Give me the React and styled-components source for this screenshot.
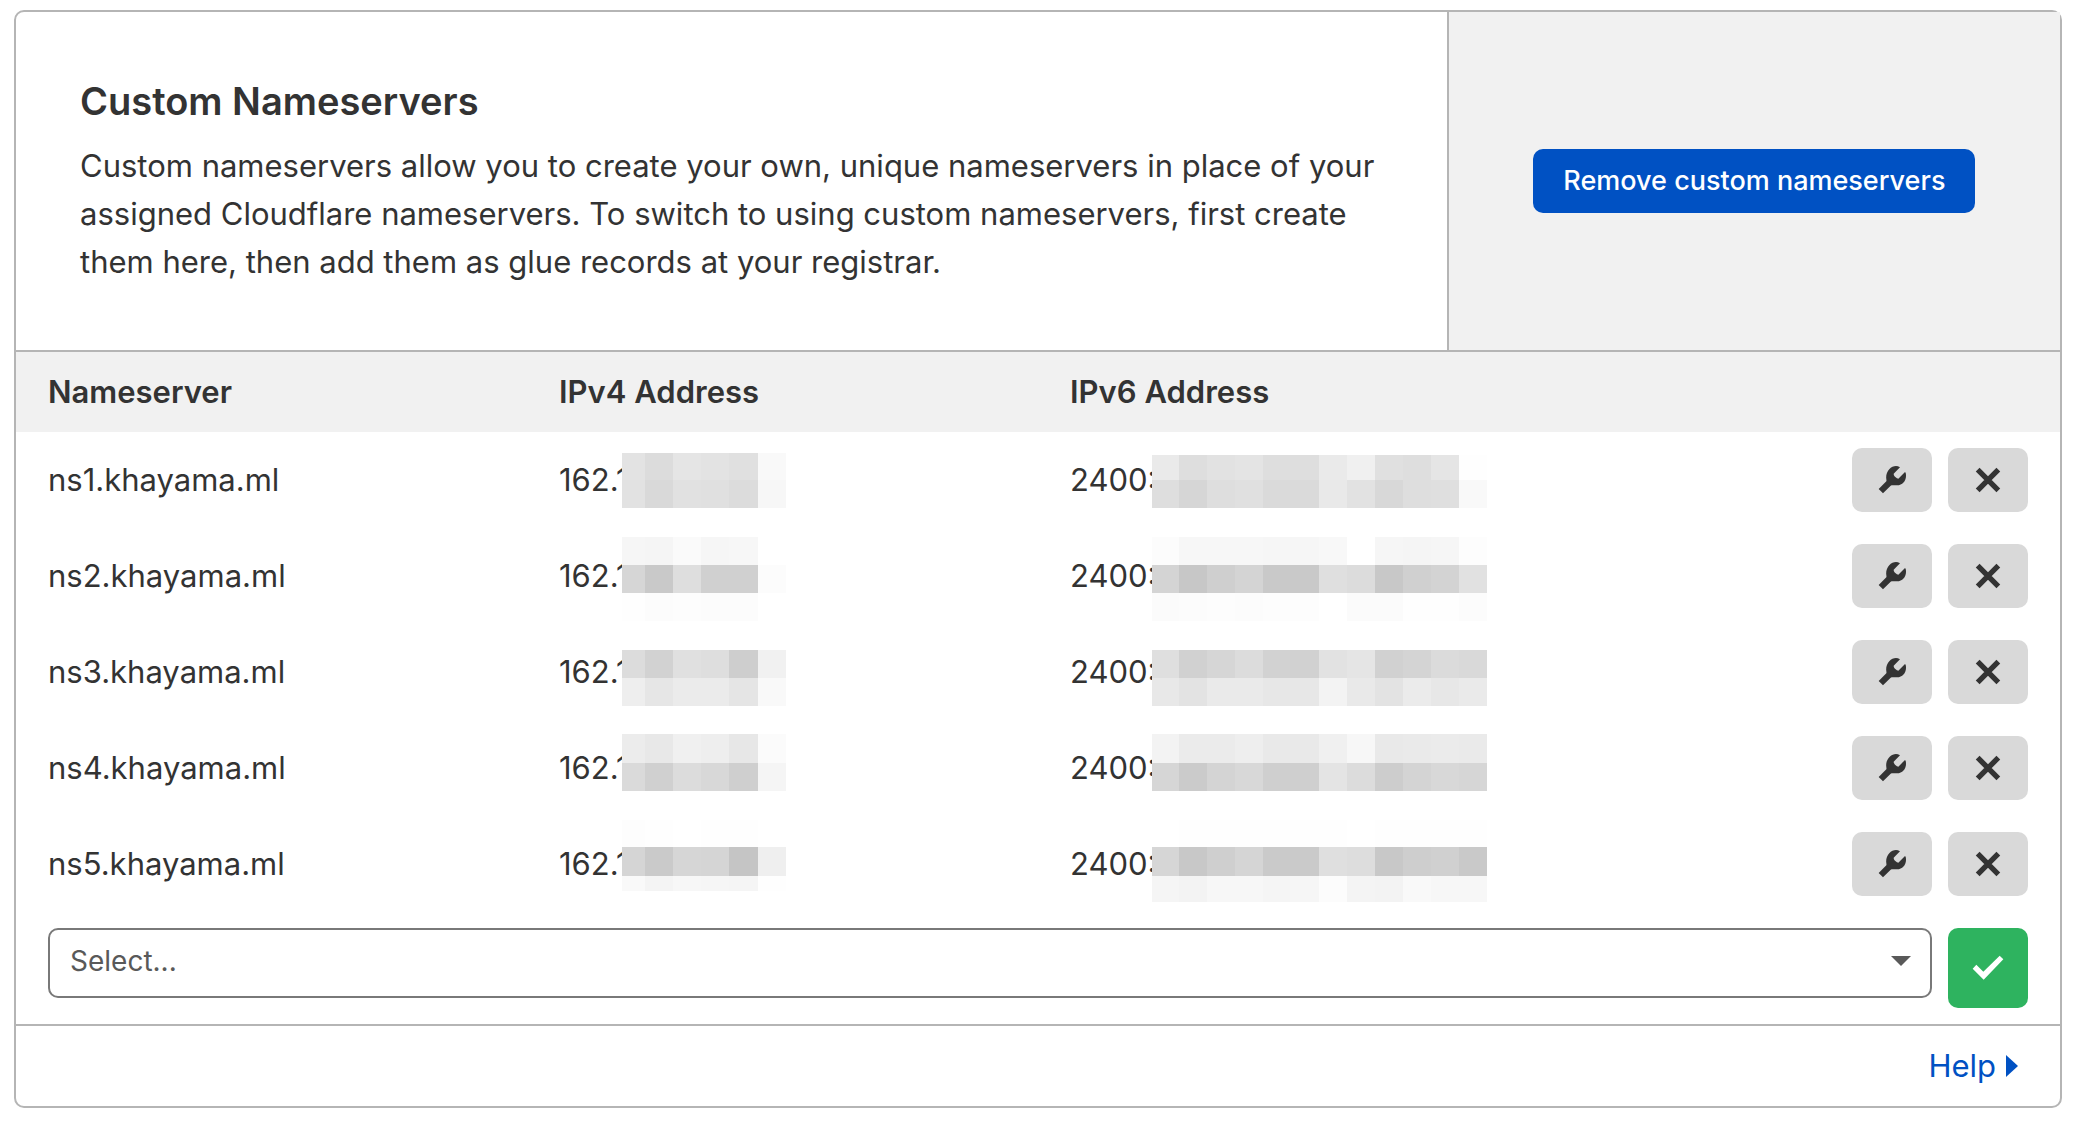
import React from "react";
import styled, { createGlobalStyle } from "styled-components";

const GlobalStyle = createGlobalStyle`
  *, *::before, *::after { box-sizing: border-box; }
  body {
    margin: 0;
    background: #fff;
    color: #333;
    font-family: Inter, "Liberation Sans", sans-serif;
    font-size: 31px;
    line-height: 48px;
  }
`;

const Card = styled.section`
  margin: 10px 14px 22px;
  border: 2px solid #b5b5b5;
  border-radius: 10px;
  background: #fff;
`;

const Header = styled.header`
  display: grid;
  grid-template-columns: minmax(0, 7fr) minmax(0, 3fr);
  border-bottom: 2px solid #b5b5b5;
`;

const Intro = styled.div`
  padding: 64px;
`;

const Title = styled.h2`
  margin: 0 0 16px;
  font-size: 38px;
  font-weight: 600;
  line-height: 50px;
`;

const Description = styled.p`
  margin: 0;
`;

const ActionPanel = styled.div`
  display: flex;
  align-items: center;
  justify-content: center;
  border-left: 2px solid #b5b5b5;
  background: #f1f1f1;
`;

const PrimaryButton = styled.button`
  height: 64px;
  padding: 0 30px;
  border: 0;
  border-radius: 10px;
  background: #0051c3;
  color: #fff;
  font: 500 27px / 40px Inter, "Liberation Sans", sans-serif;
  white-space: nowrap;
  cursor: pointer;
`;

const Table = styled.table`
  width: 100%;
  table-layout: fixed;
  border-collapse: collapse;
`;

const HeadCell = styled.th`
  height: 80px;
  padding: 0 32px;
  background: #f1f1f1;
  font-weight: 600;
  text-align: left;
`;

const Cell = styled.td`
  position: relative;
  height: 96px;
  padding: 0 32px;
`;

const Actions = styled.div`
  display: flex;
  justify-content: flex-end;
  gap: 16px;
`;

const IconButton = styled.button`
  display: flex;
  flex: none;
  align-items: center;
  justify-content: center;
  width: 80px;
  height: ${(p) => (p.$confirm ? 80 : 64)}px;
  padding: 0;
  border: 0;
  border-radius: 10px;
  background: ${(p) => (p.$confirm ? "#2eb35f" : "#d9d9d9")};
  color: ${(p) => (p.$confirm ? "#fff" : "#333")};
  cursor: pointer;
`;

const Mosaic = styled.svg`
  position: absolute;
  top: 0;
  left: ${(p) => p.$left}px;
`;

const AddRow = styled.form`
  display: flex;
  align-items: flex-start;
  gap: 16px;
  padding: 16px 32px;
`;

const SelectBox = styled.div`
  position: relative;
  flex: 1;
`;

const Select = styled.select`
  display: block;
  width: 100%;
  height: 70px;
  padding: 0 64px 4px 20px;
  border: 2px solid #797979;
  border-radius: 10px;
  appearance: none;
  background: #fff;
  color: #595959;
  font: 400 28px / 40px Inter, "Liberation Sans", sans-serif;
`;

const SelectCaret = styled.svg`
  position: absolute;
  top: 28px;
  right: 21px;
  pointer-events: none;
`;

const Footer = styled.footer`
  display: flex;
  align-items: center;
  justify-content: flex-end;
  height: 82px;
  padding: 0 42px;
  border-top: 2px solid #b5b5b5;
`;

const HelpLink = styled.a`
  display: flex;
  align-items: center;
  gap: 10px;
  color: #0051c3;
  text-decoration: none;
`;

const WrenchIcon = () => (
  <svg width="30" height="30" viewBox="0 0 90 90" aria-hidden="true">
    <path
      fill="currentColor"
      d="M5 72 L28 49 C29 47 28 44 27.500 38 C27 17 43 3 57 3 C61 3 65 4 69 6.500 L50 26 C50 29 51 32 54 35 C58 39 62 40 64 41 L84 21 C87 24 87 29 87 33 C87 48 76 61 60 61 C51 61 44 60 41 62 L18 85 Z"
    />
  </svg>
);

const CrossIcon = () => (
  <svg width="30" height="30" viewBox="0 0 90 90" aria-hidden="true">
    <path stroke="currentColor" strokeWidth="16" d="M14 14 L76 76 M76 14 L14 76" />
  </svg>
);

const CheckIcon = () => (
  <svg width="32" height="26" viewBox="0 0 96 78" aria-hidden="true">
    <path fill="currentColor" d="M2 41 L13 29 L34 50 L83 2 L94 13 L35 74 Z" />
  </svg>
);

/* Obscured address blocks: column edges and, for every band, its top, bottom and greys. */
const V4_EDGES = [0, 23, 51, 79, 107, 136, 164];
const V6_EDGES = [0, 27, 55, 83, 111, 138, 167, 195, 223, 251, 279, 307, 335];

const ROWS = [
  {
    host: "ns1.khayama.ml",
    v4: [
      [21, 48, "e3 dc e5 e3 e0 f9"],
      [48, 76, "e2 d9 e1 e0 dc f7"],
    ],
    v6: [
      [23, 48, "ea de e2 e4 de de ea f0 e0 de e5 fe"],
      [48, 76, "de d6 de e0 da da e9 e2 d8 de df f9"],
    ],
  },
  {
    host: "ns2.khayama.ml",
    v4: [
      [9, 37, "f6 f5 fa f6 f7 ff"],
      [37, 65, "d6 c9 de d0 d0 fc"],
      [65, 93, "fe fc fd fc fc ff"],
    ],
    v6: [
      [9, 37, "fc f7 f7 f7 f6 f6 f8 ff f6 f5 f6 fd"],
      [37, 65, "d4 c7 cf d4 c9 c9 df dc c8 d0 d3 e1"],
      [65, 93, "fb fc fd fc fd fd ff fb fb fe fe fc"],
    ],
  },
  {
    host: "ns3.khayama.ml",
    v4: [
      [26, 54, "dc d2 e0 de ce f1"],
      [54, 82, "ee e6 eb eb e5 f9"],
    ],
    v6: [
      [26, 54, "df d1 d6 dc d2 d1 e2 e5 d1 d4 db d9"],
      [54, 82, "e8 e3 ea ea e7 e7 f3 e9 e3 eb e7 ea"],
    ],
  },
  {
    host: "ns4.khayama.ml",
    v4: [
      [14, 43, "ec e8 f0 ee e7 fb"],
      [43, 71, "da d0 dc d8 cf f5"],
    ],
    v6: [
      [14, 43, "f3 eb eb ee e9 e9 f0 f7 e9 ea eb ea"],
      [43, 71, "d6 cb d4 d8 cf cf e4 dc cd d4 d8 d6"],
    ],
  },
  {
    host: "ns5.khayama.ml",
    v4: [
      [4, 31, "fd fe ff fe fe ff"],
      [31, 60, "d5 ca d6 d5 c5 ef"],
      [60, 75, "f9 f4 f7 f6 f5 fe"],
    ],
    v6: [
      [4, 31, "ff fe fe fe fe fe fe ff fe fe fe fe"],
      [31, 60, "d6 c8 cf d5 ca ca df dd c8 ce d0 c9"],
      [60, 86, "f5 f3 f7 f7 f5 f6 fc f4 f3 f9 f7 f7"],
    ],
  },
];

function Redaction({ left, edges, bands }) {
  return (
    <Mosaic
      $left={left}
      width={edges[edges.length - 1]}
      height="96"
      shapeRendering="crispEdges"
      aria-hidden="true"
    >
      {bands.map(([top, bottom, greys]) =>
        greys.split(" ").map((grey, i) => (
          <rect
            key={`${top}-${i}`}
            x={edges[i]}
            y={top}
            width={edges[i + 1] - edges[i]}
            height={bottom - top}
            fill={`#${grey}${grey}${grey}`}
          />
        ))
      )}
    </Mosaic>
  );
}

export default function App() {
  return (
    <>
      <GlobalStyle />
      <Card>
        <Header>
          <Intro>
            <Title>Custom Nameservers</Title>
            <Description>
              Custom nameservers allow you to create your own, unique nameservers in place of your
              assigned Cloudflare nameservers. To switch to using custom nameservers, first create
              them here, then add them as glue records at your registrar.
            </Description>
          </Intro>
          <ActionPanel>
            <PrimaryButton type="button">Remove custom nameservers</PrimaryButton>
          </ActionPanel>
        </Header>
        <Table>
          <thead>
            <tr>
              <HeadCell scope="col">Nameserver</HeadCell>
              <HeadCell scope="col">IPv4 Address</HeadCell>
              <HeadCell scope="col">IPv6 Address</HeadCell>
              <HeadCell aria-label="Actions" />
            </tr>
          </thead>
          <tbody>
            {ROWS.map((row) => (
              <tr key={row.host}>
                <Cell>{row.host}</Cell>
                <Cell>
                  162.1
                  <Redaction left={95} edges={V4_EDGES} bands={row.v4} />
                </Cell>
                <Cell>
                  2400:
                  <Redaction left={114} edges={V6_EDGES} bands={row.v6} />
                </Cell>
                <Cell>
                  <Actions>
                    <IconButton type="button" aria-label={`Edit ${row.host}`}>
                      <WrenchIcon />
                    </IconButton>
                    <IconButton type="button" aria-label={`Delete ${row.host}`}>
                      <CrossIcon />
                    </IconButton>
                  </Actions>
                </Cell>
              </tr>
            ))}
          </tbody>
        </Table>
        <AddRow onSubmit={(e) => e.preventDefault()}>
          <SelectBox>
            <Select aria-label="Nameserver to add" defaultValue="">
              <option value="">Select...</option>
            </Select>
            <SelectCaret width="20" height="10" viewBox="0 0 20 10" aria-hidden="true">
              <path fill="#595959" d="M0 0 H20 L10 10 Z" />
            </SelectCaret>
          </SelectBox>
          <IconButton $confirm type="submit" aria-label="Add nameserver">
            <CheckIcon />
          </IconButton>
        </AddRow>
        <Footer>
          <HelpLink href="#help">
            Help
            <svg width="12" height="22" viewBox="0 0 12 22" aria-hidden="true">
              <path fill="currentColor" d="M0 0 L12 11 L0 22 Z" />
            </svg>
          </HelpLink>
        </Footer>
      </Card>
    </>
  );
}
